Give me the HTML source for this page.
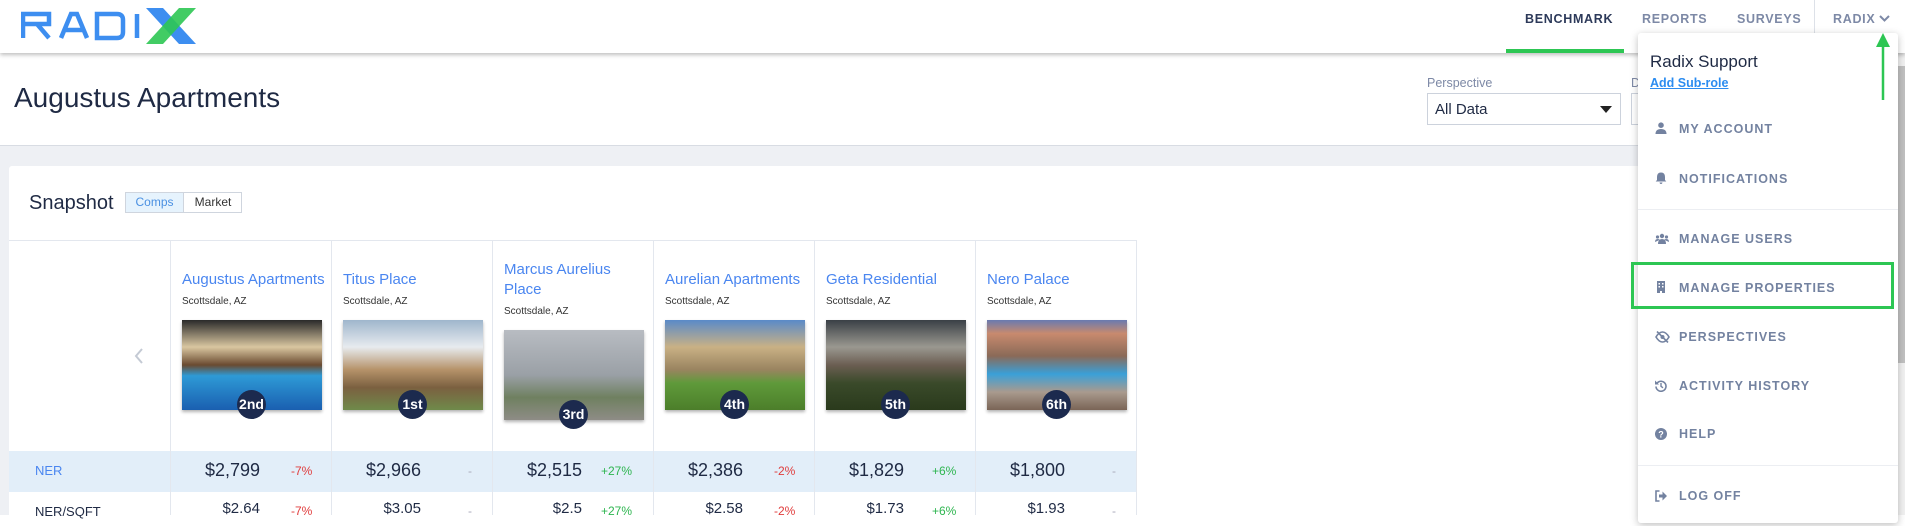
<!DOCTYPE html>
<html><head><meta charset="utf-8"><style>
*{margin:0;padding:0;box-sizing:border-box;white-space:nowrap}
body{width:1905px;height:515px;overflow:hidden;background:#fff;font-family:"Liberation Sans",Arial,sans-serif;position:relative;color:#1f2a44}
.a{position:absolute}
.nav{font-size:12.5px;font-weight:bold;letter-spacing:0.7px;color:#7d89a6;top:12px}
.col{position:absolute;top:240px;width:161px;height:252px;border-left:1px solid #e3e7ee}
.nm{position:absolute;left:11px;color:#4a86f0;font-size:15px;line-height:20px}
.loc{position:absolute;left:11px;font-size:10px;color:#333}
.img{position:absolute;left:11px;width:140px;height:90px;box-shadow:0 2px 3px rgba(0,0,0,.3)}
.bd{position:absolute;width:29px;height:29px;border-radius:50%;background:#1c2a4e;color:#fff;font-size:14px;font-weight:bold;text-align:center;line-height:29px;left:66px}
.pr{position:absolute;width:90px;text-align:right;font-size:18px;color:#1f2a44}
.pc{position:absolute;left:119px;font-size:12px}
.r{color:#e03c3c}.g{color:#2db54f}.d{color:#aab}
.mi{position:absolute;left:1679px;font-size:12.5px;font-weight:bold;letter-spacing:1px;color:#7382a0}
.ic{position:absolute;left:1655px;width:12px;height:12px;color:#7382a0;font-size:12px}
</style></head><body>
<div class="a" style="left:0;top:0;width:1905px;height:53px;background:#fff;box-shadow:0 2px 4px rgba(0,0,0,.25);z-index:2">
<svg class="a" style="left:21px;top:6px" width="180" height="38" viewBox="0 0 180 38">
<g fill="none" stroke="#3d8ef0" stroke-width="4.5">
<path d="M2 32V8h26v10H4M16 18l12 14"/>
<path d="M40 32l10-24h6l10 24M45 24h16"/>
<path d="M76 8v24h20q6 0 6-6V14q0-6-6-6z"/>
<path d="M116 8v24"/>
</g>
<path d="M125 2h17l33 36h-17z" fill="#3d8ef0"/>
<path d="M175 2h-17l-33 36h17z" fill="#2dc653" opacity=".9"/>
</svg>
<div class="a nav" style="left:1525px;color:#2d3a5a">BENCHMARK</div>
<div class="a" style="left:1506px;top:49px;width:118px;height:4px;background:#2dc653"></div>
<div class="a nav" style="left:1642px">REPORTS</div>
<div class="a nav" style="left:1737px">SURVEYS</div>
<div class="a" style="left:1814px;top:0;width:1px;height:33px;background:#dde1e8"></div>
<div class="a nav" style="left:1833px">RADIX</div>
<svg class="a" style="left:1879px;top:15px" width="11" height="8"><path d="M1 1l4.5 4.5L10 1" stroke="#7d89a6" stroke-width="2" fill="none"/></svg>
</div>
<div class="a" style="left:14px;top:82px;font-size:28px;color:#1f2a44">Augustus Apartments</div>
<div class="a" style="left:1427px;top:76px;font-size:12.5px;color:#7d89a6">Perspective</div>
<div class="a" style="left:1427px;top:93px;width:194px;height:32px;border:1px solid #ccd2dc;font-size:15px;padding:7px 7px">All Data</div>
<svg class="a" style="left:1600px;top:106px" width="12" height="7"><path d="M0 0h12L6 7z" fill="#222"/></svg>
<div class="a" style="left:1631px;top:76px;font-size:12.5px;color:#7d89a6">D</div>
<div class="a" style="left:1631px;top:93px;width:20px;height:32px;border:1px solid #ccd2dc"></div>
<div class="a" style="left:0;top:145px;width:1905px;height:370px;background:#eef0f4;border-top:1px solid #d8dce3"></div>
<div class="a" style="left:9px;top:166px;width:1890px;height:360px;background:#fff;border-radius:3px"></div>
<div class="a" style="left:29px;top:192px;font-size:20px;color:#1f2a44">Snapshot</div>
<div class="a" style="left:125px;top:192px;width:117px;height:21px;border:1px solid #cfd5de;font-size:12px;line-height:19px">
<span class="a" style="left:0;top:0;width:58px;height:19px;background:#e6f3fd;color:#4a90e2;text-align:center;border-right:1px solid #cfd5de">Comps</span>
<span class="a" style="left:58px;top:0;width:58px;text-align:center;color:#333">Market</span></div>
<div class="a" style="left:9px;top:240px;width:1127px;height:1px;background:#e3e7ee"></div>
<div class="a" style="left:9px;top:451px;width:1127px;height:41px;background:#e2eef9"></div>
<div class="a" style="left:1136px;top:240px;width:1px;height:275px;background:#e3e7ee"></div>
<div class="a" style="left:35px;top:463px;font-size:13px;color:#4a86f0">NER</div>
<div class="a" style="left:35px;top:504px;font-size:13px;color:#1f2a44">NER/SQFT</div>
<svg class="a" style="left:134px;top:348px" width="10" height="16"><path d="M8 1L2 8l6 7" stroke="#c4cad4" stroke-width="2" fill="none"/></svg>

<div class="col" style="left:170px;height:275px">
<div class="nm" style="top:30px">Augustus Apartments</div><div class="loc" style="top:56px">Scottsdale, AZ</div>
<div class="img" style="top:80px;background:linear-gradient(180deg,#2a2a2a 0,#d9c6a0 30%,#6a4a30 50%,#2e9ad6 62%,#1a5fb0 100%)"></div>
<div class="bd" style="top:150px">2nd</div></div>
<div class="col" style="left:331px;height:275px">
<div class="nm" style="top:30px">Titus Place</div><div class="loc" style="top:56px">Scottsdale, AZ</div>
<div class="img" style="top:80px;background:linear-gradient(180deg,#9fb6cc 0,#e7ebef 30%,#b6936a 55%,#7b6040 75%,#6f8a4a 100%)"></div>
<div class="bd" style="top:150px">1st</div></div>
<div class="col" style="left:492px;height:275px">
<div class="nm" style="top:20px;white-space:normal">Marcus Aurelius<br>Place</div><div class="loc" style="top:66px">Scottsdale, AZ</div>
<div class="img" style="top:90px;background:linear-gradient(180deg,#b8bcc2 0,#9aa0a6 50%,#6f8060 75%,#8e8c86 100%)"></div>
<div class="bd" style="top:160px">3rd</div></div>
<div class="col" style="left:653px;height:275px">
<div class="nm" style="top:30px">Aurelian Apartments</div><div class="loc" style="top:56px">Scottsdale, AZ</div>
<div class="img" style="top:80px;background:linear-gradient(180deg,#5a8ac8 0,#c9b185 30%,#9a8460 55%,#5f9a3a 70%,#4c7e2a 100%)"></div>
<div class="bd" style="top:150px">4th</div></div>
<div class="col" style="left:814px;height:275px">
<div class="nm" style="top:30px">Geta Residential</div><div class="loc" style="top:56px">Scottsdale, AZ</div>
<div class="img" style="top:80px;background:linear-gradient(180deg,#3a4046 0,#9a9890 30%,#6b5e52 50%,#3a4a2a 70%,#2a3a1c 100%)"></div>
<div class="bd" style="top:150px">5th</div></div>
<div class="col" style="left:975px;height:275px">
<div class="nm" style="top:30px">Nero Palace</div><div class="loc" style="top:56px">Scottsdale, AZ</div>
<div class="img" style="top:80px;background:linear-gradient(180deg,#6a7ab0 0,#c88a6e 15%,#8a6a58 40%,#3aa0d8 60%,#a99a8e 80%,#7a6456 100%)"></div>
<div class="bd" style="top:150px">6th</div></div>

<div class="pr" style="left:170px;top:460px">$2,799</div><div class="pc r" style="left:291px;top:464px">-7%</div>
<div class="pr" style="left:331px;top:460px">$2,966</div><div class="pc d" style="left:468px;top:464px">-</div>
<div class="pr" style="left:492px;top:460px">$2,515</div><div class="pc g" style="left:601px;top:464px">+27%</div>
<div class="pr" style="left:653px;top:460px">$2,386</div><div class="pc r" style="left:774px;top:464px">-2%</div>
<div class="pr" style="left:814px;top:460px">$1,829</div><div class="pc g" style="left:932px;top:464px">+6%</div>
<div class="pr" style="left:975px;top:460px">$1,800</div><div class="pc d" style="left:1112px;top:464px">-</div>
<div class="pr" style="left:170px;top:500px;font-size:15px">$2.64</div><div class="pc r" style="left:291px;top:504px">-7%</div>
<div class="pr" style="left:331px;top:500px;font-size:15px">$3.05</div><div class="pc d" style="left:468px;top:504px">-</div>
<div class="pr" style="left:492px;top:500px;font-size:15px">$2.5</div><div class="pc g" style="left:601px;top:504px">+27%</div>
<div class="pr" style="left:653px;top:500px;font-size:15px">$2.58</div><div class="pc r" style="left:774px;top:504px">-2%</div>
<div class="pr" style="left:814px;top:500px;font-size:15px">$1.73</div><div class="pc g" style="left:932px;top:504px">+6%</div>
<div class="pr" style="left:975px;top:500px;font-size:15px">$1.93</div><div class="pc d" style="left:1112px;top:504px">-</div>

<div class="a" style="left:1898px;top:53px;width:7px;height:462px;background:#f1f1f1"></div>
<div class="a" style="left:1898px;top:66px;width:7px;height:297px;background:#c1c1c1"></div>

<div class="a" style="left:1638px;top:33px;width:260px;height:490px;background:#fff;border-radius:3px;box-shadow:0 2px 8px rgba(0,0,0,.25);z-index:3">
<div class="a" style="left:12px;top:19px;font-size:17px;color:#1f2a44">Radix Support</div>
<div class="a" style="left:12px;top:43px;font-size:12.5px;font-weight:bold;color:#2b8cf0;text-decoration:underline">Add Sub-role</div>
<div class="a" style="left:0;top:176px;width:260px;height:1px;background:#eceef2"></div>
<div class="a" style="left:0;top:432px;width:260px;height:1px;background:#eceef2"></div>
</div>
<div style="position:absolute;z-index:4;left:0;top:0">
<svg class="ic" style="top:122px" viewBox="0 0 12 12"><circle cx="6" cy="3.2" r="2.8" fill="#7382a0"/><path d="M0.5 12q0-5 5.5-5t5.5 5z" fill="#7382a0"/></svg>
<div class="mi" style="top:122px">MY ACCOUNT</div>
<svg class="ic" style="top:172px" viewBox="0 0 12 12"><path d="M6 0.5q-4 0-4 4.5v3l-1.3 1.5h10.6L10 8V5q0-4.5-4-4.5z M4.5 10.5h3q-.3 1.5-1.5 1.5t-1.5-1.5z" fill="#7382a0"/></svg>
<div class="mi" style="top:172px">NOTIFICATIONS</div>
<svg class="ic" style="top:233px;width:14px" viewBox="0 0 14 12"><circle cx="7" cy="3" r="2.2" fill="#7382a0"/><circle cx="2.5" cy="4" r="1.6" fill="#7382a0"/><circle cx="11.5" cy="4" r="1.6" fill="#7382a0"/><path d="M3 11q0-5 4-5t4 5zM0 9q0-3 2.5-3t2 1zM14 9q0-3-2.5-3t-2 1z" fill="#7382a0"/></svg>
<div class="mi" style="top:232px">MANAGE USERS</div>
<div class="a" style="left:1631px;top:262px;width:263px;height:47px;border:3px solid #2dc653;z-index:5"></div>
<svg class="ic" style="top:281px" viewBox="0 0 12 12"><path d="M2 0h8v12H7V10H5v2H2z" fill="#7382a0"/><g fill="#fff"><rect x="3.5" y="2" width="1.5" height="1.5"/><rect x="7" y="2" width="1.5" height="1.5"/><rect x="3.5" y="5" width="1.5" height="1.5"/><rect x="7" y="5" width="1.5" height="1.5"/></g></svg>
<div class="mi" style="top:281px">MANAGE PROPERTIES</div>
<svg class="ic" style="top:331px;width:15px" viewBox="0 0 15 12"><path d="M1 6q3-5 6.5-5T14 6q-3 5-6.5 5T1 6z" fill="none" stroke="#7382a0" stroke-width="1.6"/><circle cx="7.5" cy="6" r="2" fill="#7382a0"/><path d="M2 0.5l11 11" stroke="#7382a0" stroke-width="1.6"/></svg>
<div class="mi" style="top:330px">PERSPECTIVES</div>
<svg class="ic" style="top:380px" viewBox="0 0 12 12"><path d="M2.2 3A5 5 0 1 1 1 6.5" fill="none" stroke="#7382a0" stroke-width="1.6"/><path d="M0 0.5v4h4z" fill="#7382a0"/><path d="M6 3v3.3l2 1.5" fill="none" stroke="#7382a0" stroke-width="1.4"/></svg>
<div class="mi" style="top:379px">ACTIVITY HISTORY</div>
<svg class="ic" style="top:428px" viewBox="0 0 12 12"><circle cx="6" cy="6" r="6" fill="#7382a0"/><text x="6" y="9.5" font-size="9" font-weight="bold" fill="#fff" text-anchor="middle" font-family="Liberation Sans">?</text></svg>
<div class="mi" style="top:427px">HELP</div>
<svg class="ic" style="top:490px" viewBox="0 0 12 12"><path d="M4.5 1H1v10h3.5" fill="none" stroke="#7382a0" stroke-width="1.6"/><path d="M4 4.5h3.5V1.5L12 6l-4.5 4.5v-3H4z" fill="#7382a0"/></svg>
<div class="mi" style="top:489px">LOG OFF</div>
<svg class="a" style="left:1875px;top:32px" width="16" height="68"><path d="M8 14v54" stroke="#2dc653" stroke-width="2.5"/><path d="M8 1L1 15h14z" fill="#2dc653"/></svg>
</div>
</body></html>
